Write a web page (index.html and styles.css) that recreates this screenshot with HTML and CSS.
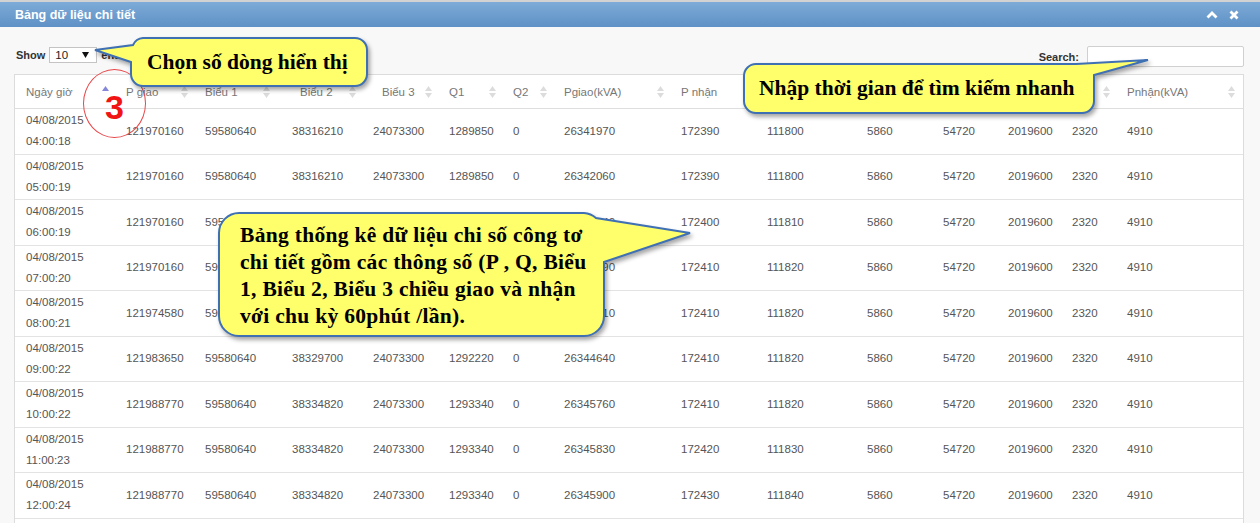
FILE: index.html
```html
<!DOCTYPE html>
<html lang="vi">
<head>
<meta charset="utf-8">
<title>Bảng dữ liệu chi tiết</title>
<link rel="stylesheet" href="styles.css">
</head>
<body>
<div class="page">
  <div class="panel-head">
    <span class="panel-title">Bảng dữ liệu chi tiết</span>
    <div class="panel-tools">
      <svg class="tool" width="12" height="9" viewBox="0 0 12 9"><polyline points="1.5,7.5 6,3 10.5,7.5" fill="none" stroke="#fff" stroke-width="2.8"/></svg>
      <svg class="tool" width="10" height="10" viewBox="0 0 10 10"><path d="M1.5 1.5 L8.5 8.5 M8.5 1.5 L1.5 8.5" stroke="#fff" stroke-width="2.8"/></svg>
    </div>
  </div>

  <div class="panel-body">
    <div class="dt-top">
      <div class="dt-length">Show <span class="select">10<svg class="caret" width="7" height="6" viewBox="0 0 7 6"><path d="M0 0 H7 L3.5 6 Z" fill="#111"/></svg></span> entries</div>
      <label class="dt-search">Search: <input type="text" class="search-input"></label>
    </div>

    <div class="dt-table">
      <div class="tr thead">
        <div class="th">Ngày giờ<svg class="sort" width="7" height="12" viewBox="0 0 7 12"><path d="M0 5 L3.5 0 L7 5 Z" fill="#8588da"/></svg></div>
        <div class="th">P giao<svg class="sort" width="7" height="12" viewBox="0 0 7 12"><path d="M0 5 L3.5 0 L7 5 Z M0 7 L3.5 12 L7 7 Z" fill="#dcdcdc"/></svg></div>
        <div class="th th-b1">Biểu 1<svg class="sort" width="7" height="12" viewBox="0 0 7 12"><path d="M0 5 L3.5 0 L7 5 Z M0 7 L3.5 12 L7 7 Z" fill="#dcdcdc"/></svg></div>
        <div class="th th-b2">Biểu 2<svg class="sort" width="7" height="12" viewBox="0 0 7 12"><path d="M0 5 L3.5 0 L7 5 Z M0 7 L3.5 12 L7 7 Z" fill="#dcdcdc"/></svg></div>
        <div class="th th-b3">Biểu 3<svg class="sort" width="7" height="12" viewBox="0 0 7 12"><path d="M0 5 L3.5 0 L7 5 Z M0 7 L3.5 12 L7 7 Z" fill="#dcdcdc"/></svg></div>
        <div class="th">Q1<svg class="sort" width="7" height="12" viewBox="0 0 7 12"><path d="M0 5 L3.5 0 L7 5 Z M0 7 L3.5 12 L7 7 Z" fill="#dcdcdc"/></svg></div>
        <div class="th">Q2<svg class="sort" width="7" height="12" viewBox="0 0 7 12"><path d="M0 5 L3.5 0 L7 5 Z M0 7 L3.5 12 L7 7 Z" fill="#dcdcdc"/></svg></div>
        <div class="th">Pgiao(kVA)<svg class="sort" width="7" height="12" viewBox="0 0 7 12"><path d="M0 5 L3.5 0 L7 5 Z M0 7 L3.5 12 L7 7 Z" fill="#dcdcdc"/></svg></div>
        <div class="th">P nhận<svg class="sort" width="7" height="12" viewBox="0 0 7 12"><path d="M0 5 L3.5 0 L7 5 Z M0 7 L3.5 12 L7 7 Z" fill="#dcdcdc"/></svg></div>
        <div class="th">Biểu 1<svg class="sort" width="7" height="12" viewBox="0 0 7 12"><path d="M0 5 L3.5 0 L7 5 Z M0 7 L3.5 12 L7 7 Z" fill="#dcdcdc"/></svg></div>
        <div class="th">Biểu 2<svg class="sort" width="7" height="12" viewBox="0 0 7 12"><path d="M0 5 L3.5 0 L7 5 Z M0 7 L3.5 12 L7 7 Z" fill="#dcdcdc"/></svg></div>
        <div class="th">Biểu 3<svg class="sort" width="7" height="12" viewBox="0 0 7 12"><path d="M0 5 L3.5 0 L7 5 Z M0 7 L3.5 12 L7 7 Z" fill="#dcdcdc"/></svg></div>
        <div class="th">Q1<svg class="sort" width="7" height="12" viewBox="0 0 7 12"><path d="M0 5 L3.5 0 L7 5 Z M0 7 L3.5 12 L7 7 Z" fill="#dcdcdc"/></svg></div>
        <div class="th">Q2<svg class="sort" width="7" height="12" viewBox="0 0 7 12"><path d="M0 5 L3.5 0 L7 5 Z M0 7 L3.5 12 L7 7 Z" fill="#dcdcdc"/></svg></div>
        <div class="th th-last">Pnhận(kVA)<svg class="sort" width="7" height="12" viewBox="0 0 7 12"><path d="M0 5 L3.5 0 L7 5 Z M0 7 L3.5 12 L7 7 Z" fill="#dcdcdc"/></svg></div>
      </div>

      <div class="tr"><div class="td">04/08/2015<br>04:00:18</div><div class="td">121970160</div><div class="td">59580640</div><div class="td">38316210</div><div class="td">24073300</div><div class="td">1289850</div><div class="td">0</div><div class="td">26341970</div><div class="td">172390</div><div class="td">111800</div><div class="td">5860</div><div class="td">54720</div><div class="td">2019600</div><div class="td">2320</div><div class="td">4910</div></div>
      <div class="tr"><div class="td">04/08/2015<br>05:00:19</div><div class="td">121970160</div><div class="td">59580640</div><div class="td">38316210</div><div class="td">24073300</div><div class="td">1289850</div><div class="td">0</div><div class="td">26342060</div><div class="td">172390</div><div class="td">111800</div><div class="td">5860</div><div class="td">54720</div><div class="td">2019600</div><div class="td">2320</div><div class="td">4910</div></div>
      <div class="tr"><div class="td">04/08/2015<br>06:00:19</div><div class="td">121970160</div><div class="td">59580640</div><div class="td">38316210</div><div class="td">24073300</div><div class="td">1289850</div><div class="td">0</div><div class="td">26342140</div><div class="td">172400</div><div class="td">111810</div><div class="td">5860</div><div class="td">54720</div><div class="td">2019600</div><div class="td">2320</div><div class="td">4910</div></div>
      <div class="tr"><div class="td">04/08/2015<br>07:00:20</div><div class="td">121970160</div><div class="td">59580640</div><div class="td">38316210</div><div class="td">24073300</div><div class="td">1289850</div><div class="td">0</div><div class="td">26342290</div><div class="td">172410</div><div class="td">111820</div><div class="td">5860</div><div class="td">54720</div><div class="td">2019600</div><div class="td">2320</div><div class="td">4910</div></div>
      <div class="tr"><div class="td">04/08/2015<br>08:00:21</div><div class="td">121974580</div><div class="td">59580640</div><div class="td">38320630</div><div class="td">24073300</div><div class="td">1290480</div><div class="td">0</div><div class="td">26343510</div><div class="td">172410</div><div class="td">111820</div><div class="td">5860</div><div class="td">54720</div><div class="td">2019600</div><div class="td">2320</div><div class="td">4910</div></div>
      <div class="tr"><div class="td">04/08/2015<br>09:00:22</div><div class="td">121983650</div><div class="td">59580640</div><div class="td">38329700</div><div class="td">24073300</div><div class="td">1292220</div><div class="td">0</div><div class="td">26344640</div><div class="td">172410</div><div class="td">111820</div><div class="td">5860</div><div class="td">54720</div><div class="td">2019600</div><div class="td">2320</div><div class="td">4910</div></div>
      <div class="tr"><div class="td">04/08/2015<br>10:00:22</div><div class="td">121988770</div><div class="td">59580640</div><div class="td">38334820</div><div class="td">24073300</div><div class="td">1293340</div><div class="td">0</div><div class="td">26345760</div><div class="td">172410</div><div class="td">111820</div><div class="td">5860</div><div class="td">54720</div><div class="td">2019600</div><div class="td">2320</div><div class="td">4910</div></div>
      <div class="tr"><div class="td">04/08/2015<br>11:00:23</div><div class="td">121988770</div><div class="td">59580640</div><div class="td">38334820</div><div class="td">24073300</div><div class="td">1293340</div><div class="td">0</div><div class="td">26345830</div><div class="td">172420</div><div class="td">111830</div><div class="td">5860</div><div class="td">54720</div><div class="td">2019600</div><div class="td">2320</div><div class="td">4910</div></div>
      <div class="tr"><div class="td">04/08/2015<br>12:00:24</div><div class="td">121988770</div><div class="td">59580640</div><div class="td">38334820</div><div class="td">24073300</div><div class="td">1293340</div><div class="td">0</div><div class="td">26345900</div><div class="td">172430</div><div class="td">111840</div><div class="td">5860</div><div class="td">54720</div><div class="td">2019600</div><div class="td">2320</div><div class="td">4910</div></div>
      <div class="tr"><div class="td">04/08/2015<br>13:00:25</div><div class="td">121988770</div><div class="td">59580640</div><div class="td">38334820</div><div class="td">24073300</div><div class="td">1293340</div><div class="td">0</div><div class="td">26345970</div><div class="td">172440</div><div class="td">111850</div><div class="td">5860</div><div class="td">54720</div><div class="td">2019600</div><div class="td">2320</div><div class="td">4910</div></div>
    </div>
  </div>

  <div class="mark">3</div>

  <div class="callout callout-length">
    <svg class="callout-shape" width="238" height="50" viewBox="0 0 238 50"><path d="M13 1 H225 A12 12 0 0 1 237 13 V37 A12 12 0 0 1 225 49 H13 A12 12 0 0 1 1 37 V25 L-35 13 L3 8 A12 12 0 0 1 13 1 Z"/></svg>
    <span class="callout-text">Chọn số dòng hiển thị</span>
  </div>

  <div class="callout callout-search">
    <svg class="callout-shape" width="352" height="51" viewBox="0 0 352 51"><path d="M13 1 H333 L405 -3 L351 12 V38 A12 12 0 0 1 339 50 H13 A12 12 0 0 1 1 38 V13 A12 12 0 0 1 13 1 Z"/></svg>
    <span class="callout-text">Nhập thời gian để tìm kiếm nhanh</span>
  </div>

  <div class="callout callout-table">
    <svg class="callout-shape" width="387" height="125" viewBox="0 0 387 125"><path d="M21 1 H366 A20 20 0 0 1 378 6 L472 21 L386 50 V104 A20 20 0 0 1 366 124 H21 A20 20 0 0 1 1 104 V21 A20 20 0 0 1 21 1 Z"/></svg>
    <span class="callout-text">Bảng thống kê dữ liệu chi số công tơ<br>chi tiết gồm các thông số (P , Q, Biểu<br>1, Biểu 2, Biểu 3 chiều giao và nhận<br>với chu kỳ 60phút /lần).</span>
  </div>
</div>
</body>
</html>
```

FILE: styles.css
```css
* { box-sizing: border-box; }

html, body {
  margin: 0;
  padding: 0;
}

body {
  width: 1260px;
  height: 523px;
  overflow: hidden;
  background: #f8f8f8;
  font-family: "Liberation Sans", Arial, sans-serif;
}

.page {
  position: relative;
  width: 1260px;
  height: 523px;
  overflow: hidden;
}

/* ---------- panel header ---------- */
.panel-head {
  height: 27px;
  border-top: 2px solid #d2d2d2;
  background: linear-gradient(#7eabd7, #5e91c6);
  display: flex;
  align-items: center;
  justify-content: space-between;
  padding: 0 21px 0 15px;
}

.panel-title {
  color: #fff;
  font-weight: bold;
  font-size: 12.5px;
}

.panel-tools {
  display: flex;
  align-items: center;
  gap: 11px;
}

.tool { display: block; }

/* ---------- panel body ---------- */
.panel-body {
  padding: 0 16px 0 14px;
  background: #f8f8f8;
}

.dt-top {
  height: 47px;
  padding: 19px 0 0 2px;
  display: flex;
  align-items: flex-start;
  justify-content: space-between;
}

.dt-length {
  margin-top: 1px;
  display: flex;
  align-items: center;
  height: 16px;
  font-size: 11px;
  font-weight: bold;
  color: #333;
}

.select {
  display: inline-flex;
  align-items: center;
  justify-content: space-between;
  width: 48px;
  height: 16px;
  margin: 0 4px;
  padding: 0 7px 0 5px;
  background: #fff;
  border: 1px solid #c4c4c4;
  font-weight: normal;
  font-size: 11.5px;
  color: #222;
}

.caret { display: block; }

.dt-search {
  display: flex;
  align-items: center;
  height: 21px;
  font-size: 11px;
  font-weight: bold;
  color: #333;
}

.search-input {
  width: 157px;
  height: 21px;
  margin: 0 0 0 8px;
  border: 1px solid #d0d0d0;
  border-radius: 2px;
  background: #fff;
  padding: 0;
}

/* ---------- table ---------- */
.dt-table {
  background: #fff;
  border: 1px solid #dcdcdc;
  border-bottom: none;
}

.tr {
  display: grid;
  grid-template-columns: 100px 79px 87px 81px 76px 64px 51px 117px 86px 100px 76px 65px 64px 55px 127px;
  height: 45.5px;
  border-bottom: 1px solid #e3e3e3;
}

.thead {
  height: 34px;
  border-bottom: 1px solid #dedede;
}

.th {
  display: flex;
  align-items: center;
  justify-content: space-between;
  padding: 0 6px 0 11px;
  font-size: 11.5px;
  color: #777;
  white-space: nowrap;
}

.th-b1 { padding-right: 11px; }
.th-b2 { padding-left: 19px; }
.th-b3 { padding-left: 20px; }
.th-last { padding-right: 8px; }

.sort { display: block; flex: none; }

.td {
  display: flex;
  align-items: center;
  padding-left: 11px;
  font-size: 11.5px;
  line-height: 21px;
  color: #555;
  white-space: nowrap;
}

/* ---------- annotation overlays ---------- */
.mark {
  position: absolute;
  left: 83px;
  top: 69px;
  width: 63px;
  height: 69px;
  border: 1.5px solid #e8474a;
  border-radius: 50%;
  display: flex;
  justify-content: center;
  align-items: center;
  padding-top: 7px;
  font-family: "Liberation Sans", Arial, sans-serif;
  font-weight: bold;
  font-size: 34px;
  color: #f01414;
}

.callout {
  position: absolute;
  font-family: "Liberation Serif", "Times New Roman", serif;
  font-weight: bold;
  font-size: 21.5px;
  color: #000;
  white-space: nowrap;
}

.callout-shape {
  position: absolute;
  left: 0;
  top: 0;
  overflow: visible;
  filter: drop-shadow(2px 3px 2px rgba(0, 0, 0, 0.35));
}

.callout-shape path {
  fill: #ffff6c;
  stroke: #3f70b4;
  stroke-width: 2;
}

.callout-text {
  position: relative;
  display: block;
}

.callout-length {
  left: 130px;
  top: 37px;
  width: 238px;
  height: 50px;
  padding-left: 17px;
  line-height: 50px;
}

.callout-search {
  left: 743px;
  top: 63px;
  width: 352px;
  height: 51px;
  padding-left: 16px;
  line-height: 51px;
}

.callout-table {
  left: 218px;
  top: 212px;
  width: 387px;
  height: 125px;
  padding: 9.5px 0 0 22px;
  line-height: 27px;
  letter-spacing: 0.3px;
}
```
